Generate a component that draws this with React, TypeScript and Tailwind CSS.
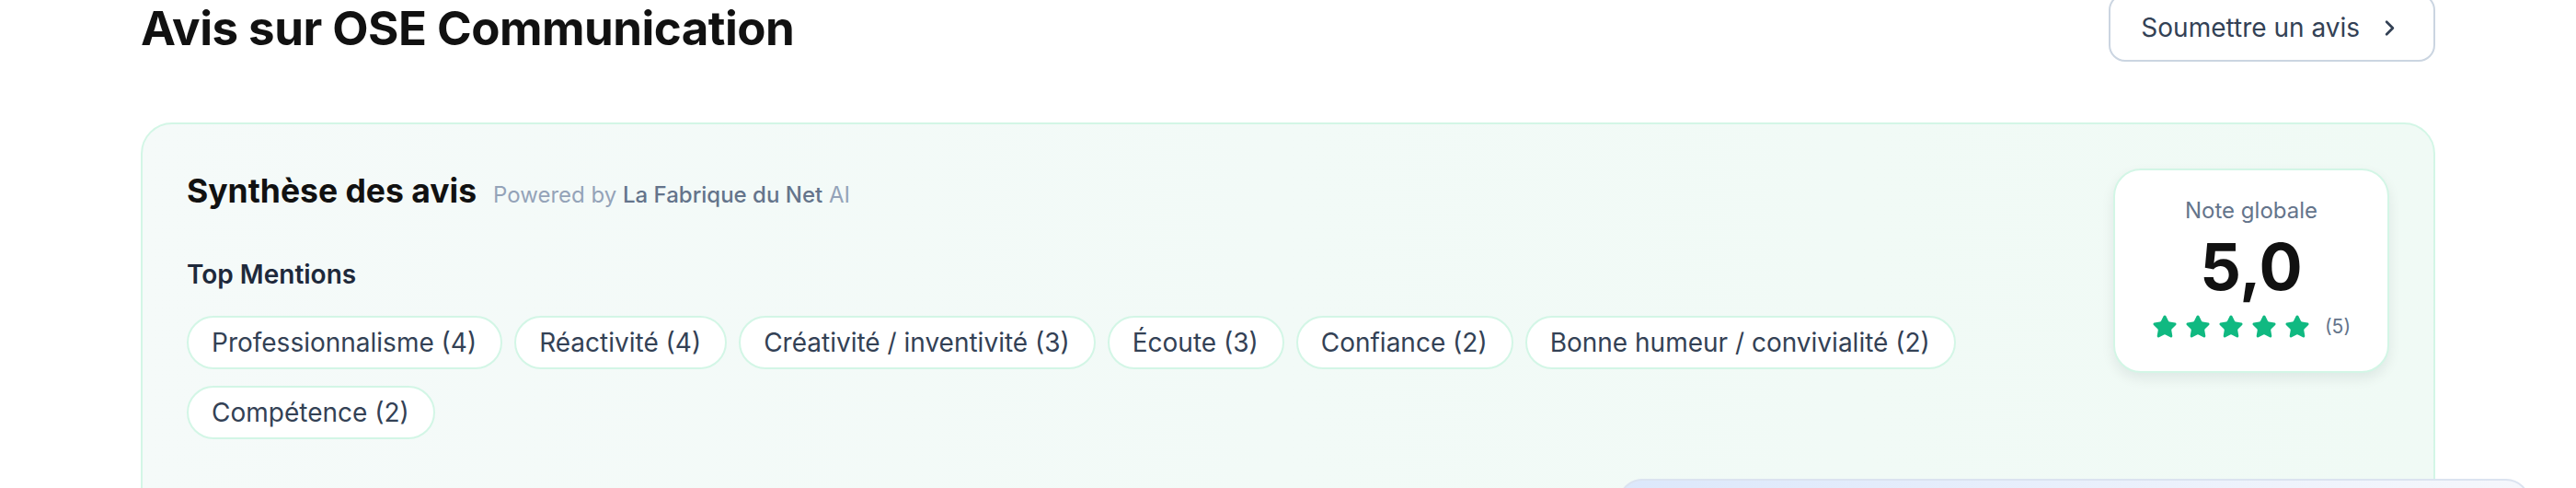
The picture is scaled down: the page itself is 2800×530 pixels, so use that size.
import React from "react";
import { ChevronRight, Star } from "lucide-react";

const mentions = [
  "Professionnalisme (4)",
  "Réactivité (4)",
  "Créativité / inventivité (3)",
  "Écoute (3)",
  "Confiance (2)",
  "Bonne humeur / convivialité (2)",
  "Compétence (2)",
];

export default function App() {
  return (
    <div
      className="relative w-full bg-white overflow-hidden h-[530px]"
      style={{ fontFamily: "Inter, 'Noto Sans', sans-serif" }}
    >
      <div className="mx-auto w-[2494px]">
        <div className="flex items-center justify-between h-[74px] mt-[-7px]">
          <h1 className="text-[51px] leading-none font-bold text-[#111111] tracking-[-0.01em]">
            Avis sur OSE Communication
          </h1>
          <button className="flex items-center h-[74px] pl-[33px] pr-[34px] gap-[19px] rounded-[18px] border-2 border-[#cbd5e1] bg-white text-[28px] text-[#334155]">
            <span>Soumettre un avis</span>
            <ChevronRight size={27} strokeWidth={2.4} />
          </button>
        </div>

        <div className="mt-[66px] min-h-[520px] rounded-[34px] border-2 border-[#d3f6e6] bg-gradient-to-r from-[#f5faf9] via-[#f2faf7] to-[#f0faf5] p-[48px] flex items-start gap-[110px]">
          <div className="flex-1 pt-[1px]">
            <div className="flex items-baseline gap-[18px]">
              <h2 className="text-[35.5px] leading-[48px] font-bold text-[#111111]">
                Synthèse des avis
              </h2>
              <span className="text-[24px] text-[#94a3b8]">
                Powered by{" "}
                <span className="font-medium text-[#64748b]">La Fabrique du Net</span> AI
              </span>
            </div>
            <h3 className="mt-[46px] text-[28px] leading-[40px] font-semibold text-[#1e293b]">
              Top Mentions
            </h3>
            <div className="mt-[25px] flex flex-wrap gap-x-[13px] gap-y-[18px]">
              {mentions.map((m) => (
                <span
                  key={m}
                  className="flex items-center h-[58px] pl-[25px] pr-[26px] rounded-full border-2 border-[#d3f6e6] bg-white text-[28px] text-[#334155]"
                >
                  {m}
                </span>
              ))}
            </div>
          </div>

          <div className="w-[300px] h-[222px] shrink-0 rounded-[30px] border-2 border-[#d3f6e6] bg-white shadow-[0_6px_14px_rgba(15,23,42,0.08)] flex flex-col items-center pt-[28px]">
            <div className="text-[24px] leading-[32px] text-[#64748b]">Note globale</div>
            <div className="mt-[10px] text-[70px] leading-[70px] font-bold text-[#111111]">5,0</div>
            <div className="mt-[14px] flex items-center gap-[8px]">
              {[0, 1, 2, 3, 4].map((i) => (
                <Star key={i} size={28} fill="#10b981" stroke="#10b981" strokeWidth={1.5} />
              ))}
              <span className="ml-[8px] text-[21px] text-[#64748b]">(5)</span>
            </div>
          </div>
        </div>
      </div>

      <div className="absolute left-[1759px] top-[520px] w-[991px] h-[120px] rounded-[26px] border-2 border-[#dbe3f0] bg-gradient-to-r from-[#dce8fb] to-[#f5f7fc]" />
    </div>
  );
}
